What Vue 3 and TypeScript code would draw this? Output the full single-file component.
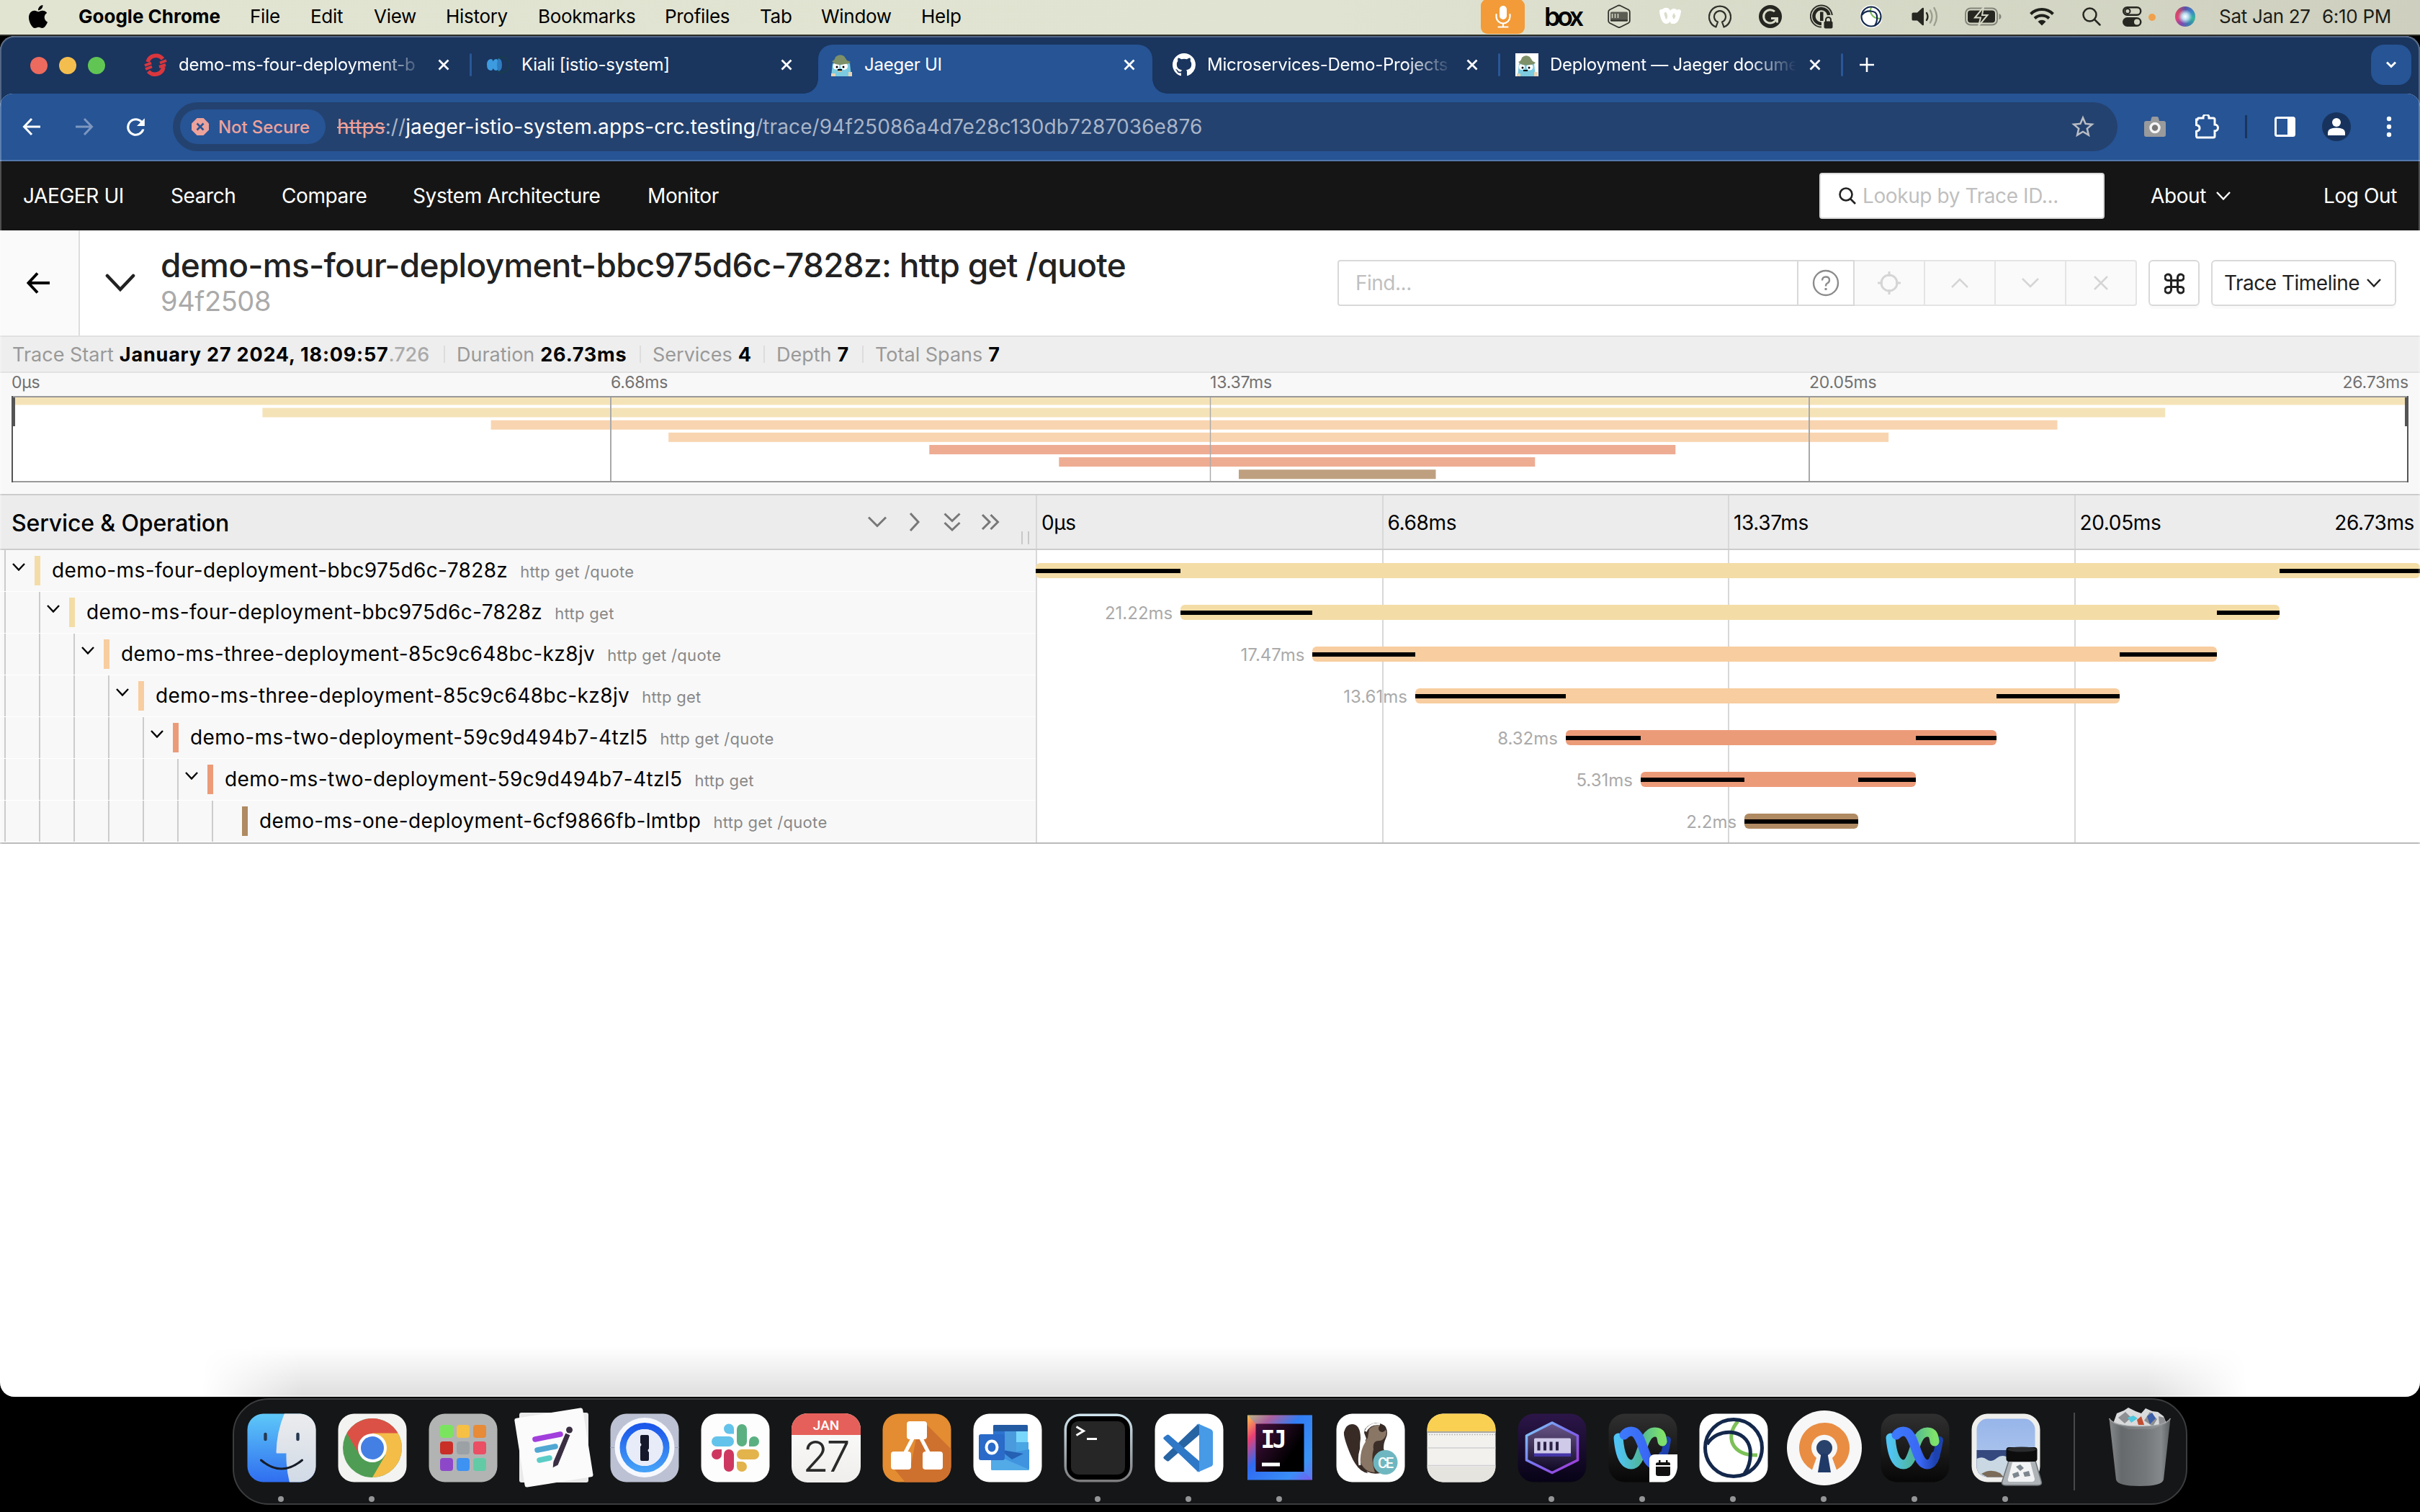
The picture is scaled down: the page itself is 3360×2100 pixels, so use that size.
<script setup lang="ts">
interface Span {
  service: string
  operation: string
  duration: string
  start: number
  end: number
  color: string
  mini: string
}

const spans: Span[] = [
  { service: 'demo-ms-four-deployment-bbc975d6c-7828z', operation: 'http get /quote', duration: '', start: 0, end: 1, color: '#f3dca6', mini: '#f5e3b8' },
  { service: 'demo-ms-four-deployment-bbc975d6c-7828z', operation: 'http get', duration: '21.22ms', start: 0.1047, end: 0.8985, color: '#f3dca6', mini: '#f5e3b8' },
  { service: 'demo-ms-three-deployment-85c9c648bc-kz8jv', operation: 'http get /quote', duration: '17.47ms', start: 0.2, end: 0.8535, color: '#f8cd9f', mini: '#f8d5b0' },
  { service: 'demo-ms-three-deployment-85c9c648bc-kz8jv', operation: 'http get', duration: '13.61ms', start: 0.2741, end: 0.7831, color: '#f8cd9f', mini: '#f8d5b0' },
  { service: 'demo-ms-two-deployment-59c9d494b7-4tzl5', operation: 'http get /quote', duration: '8.32ms', start: 0.3829, end: 0.6942, color: '#ec9b79', mini: '#eeac93' },
  { service: 'demo-ms-two-deployment-59c9d494b7-4tzl5', operation: 'http get', duration: '5.31ms', start: 0.437, end: 0.6356, color: '#ec9b79', mini: '#eeac93' },
  { service: 'demo-ms-one-deployment-6cf9866fb-lmtbp', operation: 'http get /quote', duration: '2.2ms', start: 0.512, end: 0.5942, color: '#af8a62', mini: '#bea080' },
]

const ticks = ['0µs', '6.68ms', '13.37ms', '20.05ms', '26.73ms']

const pct = (v: number) => `${(v * 100).toFixed(3)}%`

function criticalPath(i: number): [number, number][] {
  const span = spans[i]
  const child = spans[i + 1]
  if (!child) return [[span.start, span.end]]
  return [[span.start, child.start], [child.end, span.end]]
}
</script>

<template>
  <div class="desktop">
    <header class="menubar">
      <nav class="menus">
        <svg class="apple" viewBox="0 0 24 24"><path d="M12.152 6.896c-.948 0-2.415-1.078-3.96-1.04-2.04.027-3.91 1.183-4.961 3.014-2.117 3.675-.546 9.103 1.519 12.09 1.013 1.454 2.208 3.09 3.792 3.039 1.52-.065 2.09-.987 3.935-.987 1.831 0 2.35.987 3.96.948 1.637-.026 2.676-1.48 3.676-2.948 1.156-1.688 1.636-3.325 1.662-3.415-.039-.013-3.182-1.221-3.22-4.857-.026-3.04 2.48-4.494 2.597-4.559-1.429-2.09-3.623-2.324-4.39-2.376-2-.156-3.675 1.09-4.61 1.09zM15.53 3.83c.843-1.012 1.4-2.427 1.245-3.83-1.207.052-2.662.805-3.532 1.818-.78.896-1.454 2.338-1.273 3.714 1.338.104 2.715-.688 3.559-1.701" /></svg>
        <b>Google Chrome</b>
        <span>File</span>
        <span>Edit</span>
        <span>View</span>
        <span>History</span>
        <span>Bookmarks</span>
        <span>Profiles</span>
        <span>Tab</span>
        <span>Window</span>
        <span>Help</span>
      </nav>
      <div class="status">
        <span class="mic">
          <svg viewBox="0 0 24 40"><rect x="7" y="5" width="10" height="19" rx="5" fill="#fff" /><path d="M2.500 17v3a9.500 9.500 0 0 0 19 0v-3M12 30v4M5.500 34.500h13" fill="none" stroke="#fff" stroke-width="2.200" stroke-linecap="round" /></svg>
        </span>
        <span class="box">box</span>
        <svg width="32" height="34" viewBox="0 0 32 34"><path d="M14 2 3 7.500Q1.200 8.500 1.200 10.500v12.500q0 2 1.800 3L14 31.500q2 1 4 0L29 26q1.800-1 1.800-3V10.500q0-2-1.800-3L18 2q-2-1-4 0z" fill="none" stroke="#30312b" stroke-width="1.800" /><rect x="4" y="10.500" width="24" height="13" rx="1.500" fill="#5b5c52" /><path d="M4 21.500h24v1q0 1-1 1H5q-1 0-1-1z" fill="#30312b" /><path d="M6.500 13v6M10.500 13v6M14.500 13v6" stroke="#d9dbc9" stroke-width="1.500" /></svg>
        <svg width="32" height="26" viewBox="0 0 32 26" fill="none" stroke="#fff" stroke-width="6" stroke-linecap="round"><path d="M4 6q2 14 6.500 14C16 20 15 6 21 5q3 0 4 4" /><path d="M7 5q5-4 7.500 4T19 20c6 1 8-8 9-14" /></svg>
        <svg width="32" height="34" viewBox="0 0 32 34" fill="none" stroke="#30312b" stroke-width="2.200" stroke-linejoin="round"><path d="M10.500 31.500A15 15 0 1 1 21.500 31.500L19 24.500a8 8 0 1 0-6 0z" /></svg>
        <svg width="32" height="34" viewBox="0 0 32 34"><circle cx="16" cy="17" r="16" fill="#262721" /><path d="M22 10A9.200 9.200 0 1 0 24.500 20M17 19.500h8.500v6" fill="none" stroke="#d9dbc9" stroke-width="3" /></svg>
        <svg width="32" height="34" viewBox="0 0 32 34"><path d="M16 31.500A15 15 0 1 1 30.800 15" fill="none" stroke="#30312b" stroke-width="2" /><path d="M16 27A10.500 10.500 0 1 1 26.300 15" fill="none" stroke="#262721" stroke-width="4.500" /><rect x="14" y="10.500" width="4.500" height="12.500" fill="#262721" /><rect x="19.500" y="23.500" width="12" height="10" rx="2" fill="#262721" /><path d="M22 24v-2.500a3.500 3.500 0 0 1 7 0V24" fill="none" stroke="#262721" stroke-width="2" /></svg>
        <svg width="30" height="34" viewBox="0 0 30 34"><circle cx="15" cy="17" r="16" fill="#fff" /><path d="M16 3c-5 7 0 17 12 17" fill="none" stroke="#7cc05a" stroke-width="2" /><circle cx="15" cy="17" r="13.500" fill="none" stroke="#14284e" stroke-width="2.200" /><path d="M2 15C8 7 22 8 23 16q1 7-3 14" fill="none" stroke="#14284e" stroke-width="2.200" /></svg>
        <svg width="40" height="30" viewBox="0 0 40 30"><path d="M2.500 9.500H8L15 3q2-1 2 1v22q0 2-2 1l-7-6.500H2.500Q.5 20.500.5 19v-8q0-1.500 2-1.500z" fill="#262721" /><path d="M21 10q3 5 0 10" fill="none" stroke="#262721" stroke-width="2.400" stroke-linecap="round" /><path d="M26 6.500q5 8.500 0 17M31.500 3q7 12 0 24" fill="none" stroke="#9b9d8d" stroke-width="2.400" stroke-linecap="round" /></svg>
        <svg width="52" height="26" viewBox="0 0 52 26"><rect x="1" y="1.500" width="44" height="23" rx="7" fill="none" stroke="#83857a" stroke-width="2" /><path d="M47.500 9q3 1 3 4t-3 4z" fill="#83857a" /><rect x="4" y="4.500" width="38" height="17" rx="4" fill="#262721" /><path d="M26 0 14 14.500h8L19 26l12.500-15H24z" fill="#262721" stroke="#d6d8c6" stroke-width="2" /></svg>
        <svg width="36" height="26" viewBox="0 0 36 26" fill="none" stroke="#1f201b" stroke-width="4"><path d="M2.500 9.500a22 22 0 0 1 31 0M8 15.500a14.500 14.500 0 0 1 20 0" /><path d="M12.500 20a8 8 0 0 1 11 0L18 25.500z" fill="#1f201b" stroke="none" /></svg>
        <svg width="26" height="26" viewBox="0 0 26 26" fill="none" stroke="#262721" stroke-width="2.500" stroke-linecap="round"><circle cx="10.500" cy="10.500" r="9" /><path d="m17 17 7.500 7.500" /></svg>
        <svg width="27" height="28" viewBox="0 0 27 28"><rect x="1.200" y="1.200" width="24" height="10.500" rx="5.200" fill="none" stroke="#262721" stroke-width="2.400" /><circle cx="7" cy="6.400" r="3.500" fill="none" stroke="#262721" stroke-width="2" /><rect x="0" y="15" width="26.500" height="13" rx="6.500" fill="#262721" /><circle cx="20" cy="21.500" r="4" fill="#d3d5c4" /></svg>
        <i class="dot"></i>
        <i class="siri"></i>
        <span>Sat Jan 27</span>
        <span>6:10 PM</span>
      </div>
    </header>

    <main class="window">
      <div class="tabstrip">
        <div class="lights"><i class="red"></i><i class="amber"></i><i class="green"></i></div>

        <div class="tab divided">
          <svg class="fav" viewBox="0 0 32 32" fill="none"><path d="M5 12A12 12 0 0 1 26 8" stroke="#d9363e" stroke-width="5.500" /><path d="M27 19A12 12 0 0 1 6 25" stroke="#d9363e" stroke-width="5.500" /><path d="M22 13.500 31 10M21 19l9-3M1 17l9-3.500M2 22l9-3.500" stroke="#d9363e" stroke-width="4" /></svg>
          <span class="title fade">demo-ms-four-deployment-b</span>
          <svg class="close" viewBox="0 0 18 18"><path d="m2.500 2.500 13 13m0-13-13 13" /></svg>
        </div>
        <div class="tab">
          <svg class="fav" viewBox="0 0 32 32"><circle cx="21" cy="16" r="10.500" fill="none" stroke="#173e4d" stroke-width="2" /><path d="M6 8q-6 0-6 8t6 8q3 0 3-8T6 8zM13 8q-5 0-5 8t5 8q3 0 3-8t-3-8z" fill="#3d9be0" /><path d="M16 7q5 1 5 9t-5 9q-2-4-2-9t2-9z" fill="#2f7cc0" /></svg>
          <span class="title">Kiali [istio-system]</span>
          <svg class="close" viewBox="0 0 18 18"><path d="m2.500 2.500 13 13m0-13-13 13" /></svg>
        </div>
        <div class="tab active">
          <svg class="fav" viewBox="0 0 32 32"><path d="M4 14h24l2 18H2z" fill="#7ccbe0" /><path d="M2 28h6v4H2zM26 26h5v6h-5z" fill="#e8d3b3" /><circle cx="9" cy="18" r="4.500" fill="#fff" /><circle cx="20" cy="18" r="5" fill="#fff" /><circle cx="10" cy="19" r="1.500" /><circle cx="19" cy="19" r="1.500" /><path d="M12 23h5v3h-5z" fill="#d9b58a" /><path d="M11 22h6v2h-6z" /><path d="M3 11q4-1 5-6 6-5 12-1l4 6 5 2q-2 3-8 3Q8 18 3 11z" fill="#7d9068" /></svg>
          <span class="title">Jaeger UI</span>
          <svg class="close" viewBox="0 0 18 18"><path d="m2.500 2.500 13 13m0-13-13 13" /></svg>
        </div>
        <div class="tab divided">
          <svg class="fav" viewBox="0 0 16 16"><path fill="#fff" d="M8 0C3.580 0 0 3.580 0 8c0 3.540 2.290 6.530 5.470 7.590.4.070.55-.17.55-.38 0-.19-.01-.82-.01-1.490-2.010.37-2.530-.49-2.690-.94-.09-.23-.48-.94-.82-1.130-.28-.15-.68-.52-.01-.53.63-.01 1.080.58 1.230.82.72 1.210 1.870.87 2.330.66.070-.52.28-.87.51-1.070-1.780-.2-3.640-.89-3.640-3.950 0-.87.31-1.590.82-2.150-.08-.2-.36-1.020.08-2.120 0 0 .67-.21 2.200.82.64-.18 1.320-.27 2-.27s1.360.09 2 .27c1.530-1.040 2.200-.82 2.200-.82.44 1.100.16 1.920.08 2.120.51.56.82 1.270.82 2.150 0 3.070-1.870 3.750-3.650 3.950.29.25.54.73.54 1.480 0 1.070-.01 1.930-.01 2.200 0 .21.15.46.55.38A8.010 8.010 0 0 0 16 8c0-4.420-3.580-8-8-8z" /></svg>
          <span class="title fade">Microservices-Demo-Projects</span>
          <svg class="close" viewBox="0 0 18 18"><path d="m2.500 2.500 13 13m0-13-13 13" /></svg>
        </div>
        <div class="tab divided">
          <svg class="fav" viewBox="0 0 32 32"><path d="M0 0h32v32H0z" fill="#fff" /><path d="M5 14h21l2 18H3z" fill="#7ccbe0" /><path d="M2 28h5v4H2zM26 26h5v6h-5z" fill="#e8d3b3" /><circle cx="9" cy="19" r="4" fill="#fff" /><circle cx="20" cy="19" r="4.500" fill="#fff" /><circle cx="10" cy="20" r="1.500" /><circle cx="19" cy="20" r="1.500" /><path d="M11 23h6v2h-6z" /><path d="M4 12q4-1 5-6 5-5 11-1l4 6 4 2q-2 3-8 3Q9 18 4 12z" fill="#7d9068" /></svg>
          <span class="title fade">Deployment — Jaeger docume</span>
          <svg class="close" viewBox="0 0 18 18"><path d="m2.500 2.500 13 13m0-13-13 13" /></svg>
        </div>
        <svg class="plus" viewBox="0 0 20 20"><path d="M10 0v20M0 10h20" stroke="#fff" stroke-width="2.600" /></svg>
        <span class="tabsearch"><svg width="16" height="12" viewBox="0 0 16 12"><path d="m2 2.500 6 6 6-6" fill="none" stroke="#fff" stroke-width="3" /></svg></span>
      </div>

      <div class="toolbar">
        <svg width="28" height="28" viewBox="0 0 28 28" fill="none" stroke="#fff" stroke-width="3"><path d="M26 14H4M14 3 3.500 14 14 25" /></svg>
        <svg width="28" height="28" viewBox="0 0 28 28" fill="none" stroke="#7d97c0" stroke-width="3"><path d="M2 14h22M14 3l10.500 11L14 25" /></svg>
        <svg class="reload" viewBox="0 0 24 24"><path fill="#fff" d="M17.650 6.350A7.958 7.958 0 0 0 12 4a8 8 0 1 0 7.730 10h-2.080A6 6 0 1 1 12 6c1.660 0 3.140.69 4.220 1.780L13 11h7V4l-2.350 2.350z" /></svg>
        <div class="omnibox">
          <span class="chip">
            <svg width="24" height="24" viewBox="0 0 24 24"><path d="M7.500 0h9L24 7.500v9L16.500 24h-9L0 16.500v-9z" fill="#eda29b" /><path d="m7.500 7.500 9 9m0-9-9 9" stroke="#265495" stroke-width="2.600" /></svg>
            <span>Not Secure</span>
          </span>
          <span class="url"><s>https</s><i>://</i><b>jaeger-istio-system.apps-crc.testing</b><i>/trace/94f25086a4d7e28c130db7287036e876</i></span>
          <svg class="star" viewBox="0 0 24 24"><path fill="#b9bdc4" d="M22 9.240l-7.190-.62L12 2 9.190 8.630 2 9.240l5.460 4.730L5.820 21 12 17.270 18.180 21l-1.630-7.030L22 9.240zM12 15.400l-3.760 2.270 1-4.280-3.320-2.880 4.380-.38L12 6.100l1.710 4.040 4.380.38-3.320 2.880 1 4.280L12 15.400z" /></svg>
        </div>
        <svg width="30" height="28" viewBox="0 0 30 28"><path d="M3 6h6l1-4q.4-2 2-2h6q1.600 0 2 2l1 4h6q3 0 3 3v16q0 3-3 3H3q-3 0-3-3V9q0-3 3-3z" fill="#999a9c" /><circle cx="15" cy="15.500" r="6" fill="#777" stroke="#f4f4f4" stroke-width="3.500" /></svg>
        <svg width="36" height="34" viewBox="0 0 36 34"><path d="M4 7q0-2 2-2h6V4a4 4 0 0 1 8 0v1h6q2 0 2 2v7a4.500 4.500 0 0 1 0 9v7q0 2-2 2H4q-1.500 0-1.500-2v-6.500q4.500-1 4.500-4.500t-4.500-4.500V7z" fill="none" stroke="#fff" stroke-width="3" /></svg>
        <i class="bar"></i>
        <svg width="30" height="28" viewBox="0 0 30 28"><rect x="1.500" y="1.500" width="26" height="25" rx="2" fill="none" stroke="#fff" stroke-width="3" /><path d="M18 1h9v26h-9z" fill="#fff" /></svg>
        <svg width="40" height="40" viewBox="0 0 40 40"><circle cx="20" cy="20" r="20" fill="#17335d" /><circle cx="20" cy="14" r="6" fill="#fff" /><path d="M8 32v-4q0-6.500 12-6.500T32 28v4z" fill="#fff" /></svg>
        <svg width="8" height="30" viewBox="0 0 8 30" fill="#fff"><circle cx="4" cy="4" r="3.200" /><circle cx="4" cy="15" r="3.200" /><circle cx="4" cy="26" r="3.200" /></svg>
      </div>

      <nav class="appnav">
        <b>JAEGER UI</b>
        <span>Search</span>
        <span>Compare</span>
        <span>System Architecture</span>
        <span>Monitor</span>
        <div class="lookup">
          <svg width="24" height="24" viewBox="0 0 24 24" fill="none" stroke="#222" stroke-width="2.600"><circle cx="10" cy="10" r="8.500" /><path d="m16 16 7 7" /></svg>
          <span>Lookup by Trace ID...</span>
        </div>
        <span>About</span>
        <svg width="20" height="12" viewBox="0 0 20 12" fill="none" stroke="#fff" stroke-width="2.400"><path d="m1 1 9 9.500L19 1" /></svg>
        <span class="logout">Log Out</span>
      </nav>

      <section class="tracehead">
        <span class="back"><svg width="34" height="30" viewBox="0 0 34 30" fill="none" stroke="#000" stroke-width="4"><path d="M33 15H4M16 1.500 3.500 15 16 28.500" /></svg></span>
        <svg class="collapse" viewBox="0 0 42 26" fill="none" stroke="#222" stroke-width="4.600" stroke-linecap="round"><path d="m3 3 18 19L39 3" /></svg>
        <div class="names">
          <h1>demo-ms-four-deployment-bbc975d6c-7828z: http get /quote</h1>
          <small>94f2508</small>
        </div>
        <div class="find">
          <span class="input">Find...</span>
          <span class="help"><svg width="38" height="38" viewBox="0 0 38 38" fill="none" stroke="#8c8c8c" stroke-width="2.400"><circle cx="19" cy="19" r="17" /><path d="M14 15.500q0-5 5-5t5 4.500q0 3-3 4.500-2 1-2 4" /><path d="M19 26v3" stroke-width="3" /></svg></span>
          <span class="btn"><svg width="34" height="34" viewBox="0 0 34 34" fill="none" stroke="#d5d5d5" stroke-width="3"><circle cx="17" cy="17" r="11" /><path d="M17 1v7M17 26v7M1 17h7M26 17h7" /></svg></span>
          <span class="btn"><svg width="24" height="14" viewBox="0 0 24 14" fill="none" stroke="#d5d5d5" stroke-width="2.600"><path d="M1 13 12 2l11 11" /></svg></span>
          <span class="btn"><svg width="24" height="14" viewBox="0 0 24 14" fill="none" stroke="#d5d5d5" stroke-width="2.600"><path d="m1 1 11 11L23 1" /></svg></span>
          <span class="btn"><svg width="20" height="20" viewBox="0 0 20 20" fill="none" stroke="#d5d5d5" stroke-width="2.600"><path d="m1 1 18 18M19 1 1 19" /></svg></span>
        </div>
        <span class="cmd"><svg width="28" height="30" viewBox="0 0 28 30" fill="none" stroke="#222" stroke-width="3"><path d="M9.500 10.500h9v9h-9zM9.500 10.500H6A4.300 4.300 0 1 1 9.500 6zM18.500 10.500V6a4.300 4.300 0 1 1 3.500 4.500zM18.500 19.500H22a4.300 4.300 0 1 1-3.500 4.500zM9.500 19.500V24A4.300 4.300 0 1 1 6 19.500z" /></svg></span>
        <span class="viewsel"><em>Trace Timeline</em><svg width="20" height="12" viewBox="0 0 20 12" fill="none" stroke="#222" stroke-width="2.400"><path d="m1 1 9 9.500L19 1" /></svg></span>
      </section>

      <section class="overview">
        <span class="c1"><i>Trace Start</i> <b>January 27 2024, 18:09:57</b><b class="ms">.726</b></span>
        <span class="c2"><i>Duration</i> <b>26.73ms</b></span>
        <span class="c3"><i>Services</i> <b>4</b></span>
        <span class="c4"><i>Depth</i> <b>7</b></span>
        <span class="c5"><i>Total Spans</i> <b>7</b></span>
      </section>

      <section class="minimap">
        <div class="miniticks"><span v-for="t in ticks" :key="t">{{ t }}</span></div>
        <svg class="canvas" viewBox="0 0 3328 120" preserveAspectRatio="none">
          <rect width="3328" height="120" fill="#fff" />
          <rect v-for="(s, i) in spans" :key="i" :x="s.start * 3328" :y="i * 17.14 - 0.6" :width="(s.end - s.start) * 3328" height="13" :fill="s.mini" />
          <path d="M832 0v120M2496 0v120" stroke="#a9a9a9" stroke-width="2" /><path d="M1664.500 0v120" stroke="#a9a9a9" stroke-width="1.400" />
          <path d="M0 1h3328M0 119h3328" stroke="#999" stroke-width="2" />
          <path d="M1 0v120M3327 0v120" stroke="#555" stroke-width="2" />
          <path d="M2.500 2v40M3325.500 2v40" stroke="#555" stroke-width="5" />
        </svg>
      </section>

      <section class="timeline">
        <div class="thead">
          <div class="namecol">
            <h2>Service &amp; Operation</h2>
            <svg width="28" height="28" viewBox="0 0 28 28"><path d="m2 7.500 12 12 12-12" /></svg>
            <svg width="28" height="28" viewBox="0 0 28 28"><path d="m8 2 11 12L8 26" /></svg>
            <svg width="28" height="28" viewBox="0 0 28 28"><path d="m3.500 2.500 10.500 10 10.500-10M3.500 15 14 25l10.500-10" /></svg>
            <svg width="28" height="28" viewBox="0 0 28 28"><path d="m4 4 10 10L4 24M15.500 4l10 10-10 10" /></svg>
            <i class="grip"></i>
          </div>
          <div class="scale"><span v-for="t in ticks" :key="t">{{ t }}</span></div>
        </div>

        <div v-for="(s, i) in spans" :key="i" class="row">
          <div class="namecol">
            <i v-for="g in i + 1" :key="g" class="guide"></i>
            <span class="caret"><svg v-if="i < spans.length - 1" width="18" height="11" viewBox="0 0 18 11"><path d="m1 1 8 8.500L17 1" fill="none" stroke="#000" stroke-width="2.400" /></svg></span>
            <i class="swatch" :style="{ background: s.color }"></i>
            <span class="svc">{{ s.service }}</span>
            <span class="op">{{ s.operation }}</span>
          </div>
          <div class="track">
            <span v-if="s.duration" class="dur" :style="{ right: pct(1 - s.start) }">{{ s.duration }}</span>
            <i class="spanbar" :style="{ left: pct(s.start), width: pct(s.end - s.start), background: s.color }"></i>
            <i v-for="(c, k) in criticalPath(i)" :key="k" class="crit" :style="{ left: pct(c[0]), width: pct(c[1] - c[0]) }"></i>
          </div>
        </div>
      </section>
      <i class="glow"></i>
    </main>

    <footer class="dock">
      <div class="app run">
        <svg viewBox="0 0 96 96">
          <defs><linearGradient id="fb" x2="0" y2="1"><stop stop-color="#5ec9f8" /><stop offset="1" stop-color="#2f6df0" /></linearGradient><linearGradient id="fw" x2="0" y2="1"><stop stop-color="#ececee" /><stop offset="1" stop-color="#d0dae6" /></linearGradient><clipPath id="sq"><rect x=".5" y=".5" width="95" height="95" rx="22" /></clipPath></defs>
          <g clip-path="url(#sq)"><path d="M0 0h96v96H0z" fill="url(#fb)" /><path d="M52 0q-11 26-11.500 54 0 1.500 1.500 1.500h12.500Q54 76 59 96h37V0z" fill="url(#fw)" /><path d="M25.500 29v7M70.500 29v7" stroke="#26384f" stroke-width="4.400" stroke-linecap="round" /><path d="M19.500 65q28 24 57 0" fill="none" stroke="#151c28" stroke-width="3" stroke-linecap="round" /></g>
        </svg>
      </div>
      <div class="app run">
        <svg viewBox="0 0 96 96"><rect x=".5" y=".5" width="95" height="95" rx="22" fill="#f3f3f2" /><circle cx="48" cy="48" r="41" fill="#4f9d54" /><path d="M48 48 12.500 27.500A41 41 0 0 1 83.500 27.500z" fill="#dc5146" /><path d="M48 27.500h35.500A41 41 0 0 1 48 89L66 58z" fill="#f3bd48" /><path d="M12.500 27.500 30.500 58 48 27.500z" fill="#dc5146" /><circle cx="48" cy="48" r="20" fill="#fff" /><circle cx="48" cy="48" r="16" fill="#447fe4" /></svg>
      </div>
      <div class="app">
        <svg viewBox="0 0 96 96"><rect x=".5" y=".5" width="95" height="95" rx="22" fill="#b2b4b4" /><g><rect x="16" y="16" width="18" height="18" rx="4" fill="#7be45f" /><rect x="39" y="16" width="18" height="18" rx="4" fill="#f5c044" /><rect x="62" y="16" width="18" height="18" rx="4" fill="#e78b37" /><rect x="16" y="39" width="18" height="18" rx="4" fill="#c92f26" /><rect x="39" y="39" width="18" height="18" rx="4" fill="#9ba1a5" /><rect x="62" y="39" width="18" height="18" rx="4" fill="#ea4f64" /><rect x="16" y="62" width="18" height="18" rx="4" fill="#8d48c9" /><rect x="39" y="62" width="18" height="18" rx="4" fill="#3d92f2" /><rect x="62" y="62" width="18" height="18" rx="4" fill="#62cba6" /></g></svg>
      </div>
      <div class="app">
        <svg class="wide" viewBox="-8 -8 112 112"><rect x="0" y="-1" width="96" height="97" rx="3" fill="#e9e9ea" /><g transform="rotate(-9 48 48)"><rect x="0" y="-1" width="96" height="97" rx="3" fill="#fbfbfc" /></g><path d="m22 36 35-7" stroke="#a23fdc" stroke-width="7.500" stroke-linecap="round" /><path d="m25 51 25-5" stroke="#50a7d2" stroke-width="7.500" stroke-linecap="round" /><path d="m28 65 14-3" stroke="#5accc6" stroke-width="7.500" stroke-linecap="round" /><path d="m64 27 7 3-17 42-8 4 1-9z" fill="#3a2f42" stroke="#fbfbfc" stroke-width="1" /><circle cx="69.500" cy="23" r="4.500" fill="#3a2f42" /></svg>
      </div>
      <div class="app">
        <svg viewBox="0 0 96 96"><defs><linearGradient id="op" x2="0" y2="1"><stop stop-color="#1b57ea" /><stop offset="1" stop-color="#45a0f8" /></linearGradient></defs><rect x=".5" y=".5" width="95" height="95" rx="22" fill="#bcc2d3" /><path d="M0 47.500h96" stroke="#9da5bb" /><circle cx="48" cy="47.500" r="41.500" fill="#f6f8fe" /><circle cx="48" cy="47.500" r="30" fill="#fff" stroke="url(#op)" stroke-width="9" /><circle cx="48" cy="47.500" r="25.500" fill="#e8ecf8" /><path d="M44 30h8q2 0 2 2v17q-3 2.500 0 5v10q0 2-2 2h-8q-2 0-2-2V46q3-2.500 0-5v-9q0-2 2-2z" fill="#15182a" /></svg>
      </div>
      <div class="app">
        <svg viewBox="0 0 96 96"><rect x=".5" y=".5" width="95" height="95" rx="22" fill="#fdfdfd" /><g fill="#63c3ea"><path d="M46 28.500V21.500a7 7 0 1 0-7 7z" /><rect x="15" y="32" width="31" height="14" rx="7" /></g><g fill="#5ab081"><rect x="50" y="15" width="14" height="31" rx="7" /><path d="M67 46V39a7 7 0 1 1 7 7z" /></g><g fill="#ce3860"><rect x="32" y="50" width="14" height="31" rx="7" /><path d="M29 50v7a7 7 0 1 1-7-7z" /></g><g fill="#e3b34c"><rect x="50" y="50" width="31" height="14" rx="7" /><path d="M50 67h7a7 7 0 1 1-7 7z" /></g></svg>
      </div>
      <div class="app calendar"><span class="mon">JAN</span><span class="day">27</span></div>
      <div class="app">
        <svg viewBox="0 0 96 96"><g clip-path="url(#sq)"><path d="M0 0h96v96H0z" fill="#e38c31" /><path d="M60 14 96 50v46H32L14 74l26-4 8-40z" fill="#cf712e" /></g><path d="M43 33 29 60M53 33l14 27" stroke="#fff" stroke-width="5" /><rect x="34" y="11" width="28" height="25" rx="4" fill="#fff" /><rect x="12" y="53" width="28" height="25" rx="4" fill="#fff" /><rect x="56" y="53" width="28" height="25" rx="4" fill="#fff" /></svg>
      </div>
      <div class="app outlook">
        <svg viewBox="0 0 96 96"><rect x=".5" y=".5" width="95" height="95" rx="22" fill="#fff" /><path d="M28 18q0-2 2-2h44q2 0 2 2v38H28z" fill="#2e74cf" /><path d="M28 18q0-2 2-2h44q2 0 2 2v7H28z" fill="#235ba2" /><path d="M44 25h16v15H44zM44 40h16v15H44z" fill="#4a9ade" /><path d="M60 25h16v15H60z" fill="#78d7fb" /><path d="M60 40h17v15H60z" fill="#4ba6e4" /><path d="M25 60 78 50v27q0 2-2 2H27q-2 0-2-2z" fill="#3f93df" /><path d="m25 55 53 23q-1 1-2 1H27q-2 0-2-2z" fill="#52aae7" /><path d="M36 50 70 56 54 64z" fill="#2460b4" /><rect x="8" y="29" width="36" height="36" rx="3" fill="#2a6ac8" /><ellipse cx="26" cy="47" rx="7.500" ry="8.500" fill="none" stroke="#fff" stroke-width="4" /></svg>
      </div>
      <div class="app run terminal">
        <svg viewBox="0 0 96 96"><defs><linearGradient id="tm" x2="0" y2="1"><stop stop-color="#cfe5ef" /><stop offset="1" stop-color="#7b7a7c" /></linearGradient></defs><rect x=".5" y=".5" width="95" height="95" rx="22" fill="url(#tm)" /><rect x="4" y="4" width="88" height="88" rx="18" fill="#000" /><rect x="10" y="11" width="75" height="74" rx="10" fill="#262627" /><path d="m17.500 18.500 10 6-10 6M32 35.500h14" fill="none" stroke="#fff" stroke-width="3" /></svg>
      </div>
      <div class="app run">
        <svg viewBox="0 0 96 96"><rect x=".5" y=".5" width="95" height="95" rx="22" fill="#fff" /><path d="M13 60q-1.500 1.500 0 3l4 3q1.500 1 3 0L63 29V15q-2-1-4 1z" fill="#2664a4" /><path d="M13 36q-1.500-1.500 0-3l4-3q1.500-1 3 0L63 67v14q-2 1-4-1z" fill="#2e78c7" /><path d="m62 15 16 7q3 1.500 3 4v44q0 3-3 4l-16 7q-3 1-4-1 4 2 4-3V19q0-4-4-3 2-2 4-1z" fill="#479ae6" /></svg>
      </div>
      <div class="app run">
        <svg viewBox="0 0 96 96"><defs><linearGradient id="ij1" x2="1" y2="1"><stop stop-color="#ffc34a" /><stop offset=".2" stop-color="#e83f73" /><stop offset=".42" stop-color="#2f6bf2" /><stop offset=".8" stop-color="#3a8ef6" /><stop offset="1" stop-color="#7a5af0" /></linearGradient><linearGradient id="ij2" x2="1" y2=".7"><stop stop-color="#471041" /><stop offset=".8" stop-color="#000" /></linearGradient></defs><path d="M3 2.500h90v90H3z" fill="url(#ij1)" /><path d="M3 2.500 14.500 14.500h67L93 2.500zM81.500 14.500 93 2.500v90L81.500 81z" fill="#39a0f5" opacity=".35" /><path d="M14.500 14.500h67v66.500h-67z" fill="url(#ij2)" /><text x="21.500" y="47.500" font-family="DejaVu Sans Mono, monospace" font-size="33" font-weight="700" fill="#fff" textLength="36">IJ</text><path d="M23 68.500h25v5H23z" fill="#fff" /></svg>
      </div>
      <div class="app">
        <svg viewBox="0 0 96 96"><rect x=".5" y=".5" width="95" height="95" rx="22" fill="#fff" /><path d="M22 15q12 0 12 20-4 25 10 48-14-2-24-26T11 26q3-11 11-11z" fill="#382b26" /><path d="M40 22q6-8 16-9 9 1 13 6 4 8 0 16-3 6-3 14l8 20-12 14q-18 3-26-8-5-20 6-40l-3-8z" fill="#3b2e29" /><path d="M46 22q6-6 14-5 8 2 10 9-1 10-9 12-11-1-9 12-4 14 2 32-14 0-20-14-2-20 10-34z" fill="#8a7665" /><path d="M41 25q6-12 20-10" fill="none" stroke="#fff" stroke-width="3" /><path d="M33 72q-3-18 7-34" fill="none" stroke="#fff" stroke-width="3" /><circle cx="64" cy="21" r="5" fill="#382b26" /><circle cx="68.500" cy="68" r="17" fill="#6fb7c0" /><text x="58" y="75.500" font-size="20" font-family="Roboto" font-weight="500" fill="#fff" textLength="22">CE</text></svg>
      </div>
      <div class="app">
        <svg viewBox="0 0 96 96"><g clip-path="url(#sq)"><path d="M0 0h96v96H0z" fill="#f2f1ee" /><path d="M0 0h96v25H0z" fill="#fad052" /><path d="M0 25h96v2H0z" fill="#a8a7a4" /><path d="M3 29.500h92" stroke="#b4b3b0" stroke-width="1.500" stroke-dasharray="1.500 2" /><path d="M0 48h96M0 72.500h96" stroke="#cfced1" stroke-width="1.500" /><path d="M0 74h96v22H0z" fill="#e6e4df" /></g></svg>
      </div>
      <div class="app run">
        <svg viewBox="0 0 96 96"><defs><linearGradient id="hb" x2="0" y2="1"><stop stop-color="#2c1649" /><stop offset="1" stop-color="#070316" /></linearGradient><linearGradient id="hs" x2="1" y2="1"><stop offset=".1" stop-color="#7dc0f5" /><stop offset=".5" stop-color="#7a6cf0" /><stop offset="1" stop-color="#a535d2" /></linearGradient><linearGradient id="hi" x2="0" y2="1"><stop stop-color="#6b578a" /><stop offset="1" stop-color="#0c0620" /></linearGradient></defs><rect x=".5" y=".5" width="95" height="95" rx="22" fill="url(#hb)" /><path d="M48 13 83.500 31v34L48 82.500 12.500 65V31z" fill="url(#hi)" stroke="url(#hs)" stroke-width="3.600" stroke-linejoin="round" /><path d="M23 36q0-1.500 1.500-1.500h48q1.500 0 1.500 1.500v20H23z" fill="#cfcae8" /><path d="M23 55.500h51V60H23z" fill="#4536a8" /><path d="M29.500 39.500v12M38 39.500v12M46.500 39.500v12M55 39.500v12" stroke="#2d2147" stroke-width="4" /></svg>
      </div>
      <div class="app run">
        <svg viewBox="0 0 96 96"><defs><linearGradient id="wb" x2="0" y2="1"><stop stop-color="#303031" /><stop offset="1" stop-color="#070707" /></linearGradient><linearGradient id="wc" x1="0" x2="1"><stop stop-color="#50c4f5" /><stop offset=".5" stop-color="#4fb59a" /><stop offset="1" stop-color="#7ee26a" /></linearGradient><linearGradient id="wd" x1="0" x2="1"><stop stop-color="#3d78fa" /><stop offset=".6" stop-color="#3a68f5" /><stop offset="1" stop-color="#1d41ae" /></linearGradient></defs><rect x=".5" y=".5" width="95" height="95" rx="22" fill="url(#wb)" /><path d="M65 71c10 0 14-15 17-34" fill="none" stroke="#1d41ae" stroke-width="10" stroke-linecap="round" /><path d="M14 34c2 25 8 37 18 37 16 0 13-45 33-45 8 0 9 6 10 13" fill="none" stroke="url(#wc)" stroke-width="13" stroke-linecap="round" /><path d="M22 30q4-5 10-5c17 0 16 46 33 46 6 0 9-6 11-12" fill="none" stroke="url(#wd)" stroke-width="13" stroke-linecap="round" /><path d="M57 65q0-8 8-8h31v18q-2 18-18 20.500H57z" fill="#fff" /><path d="M70 68h14q2 0 2 2v2H66v-2q0-2 4-2zM66 74h20v10q0 3-3 3H69q-3 0-3-3zM70 65h2.500v4H70zM80 65h2.500v4H80z" fill="#111" /></svg>
      </div>
      <div class="app run">
        <svg viewBox="0 0 96 96"><rect x=".5" y=".5" width="95" height="95" rx="22" fill="#fff" /><path d="M54 11C36 31 44 59 81 58" fill="none" stroke="#7cc057" stroke-width="5" /><circle cx="48" cy="48" r="39.500" fill="none" stroke="#14284c" stroke-width="5" /><path d="M11 43C25 19 66 20 71 50q2 20-8 34" fill="none" stroke="#14284c" stroke-width="5" /></svg>
      </div>
      <div class="app run">
        <svg class="disc" viewBox="-4 -4 104 104"><circle cx="48" cy="48" r="52" fill="#f7f7f7" /><path d="M31 78.500a35 35 0 1 1 34 0L59 62a18 18 0 1 0-22 0z" fill="#e98d43" /><circle cx="48" cy="48" r="11" fill="#29426b" /><path d="M43.500 56h9L57 82H39z" fill="#203a68" /></svg>
      </div>
      <div class="app run">
        <svg viewBox="0 0 96 96"><rect x=".5" y=".5" width="95" height="95" rx="22" fill="url(#wb)" /><path d="M65 71c10 0 14-15 17-34" fill="none" stroke="#1d41ae" stroke-width="10" stroke-linecap="round" /><path d="M14 34c2 25 8 37 18 37 16 0 13-45 33-45 8 0 9 6 10 13" fill="none" stroke="url(#wc)" stroke-width="13" stroke-linecap="round" /><path d="M22 30q4-5 10-5c17 0 16 46 33 46 6 0 9-6 11-12" fill="none" stroke="url(#wd)" stroke-width="13" stroke-linecap="round" /></svg>
      </div>
      <div class="app run">
        <svg class="over" viewBox="0 0 104 104"><defs><linearGradient id="ps" x2="0" y2="1"><stop stop-color="#97b5ea" /><stop offset="1" stop-color="#b5cbee" /></linearGradient></defs><rect x=".5" y=".5" width="95" height="95" rx="22" fill="#eeeeec" /><rect x="7.500" y="7.500" width="81" height="81" rx="15" fill="url(#ps)" /><path d="M7.500 51h81v22q0 15.500-15 15.500h-51q-15-2-15-15z" fill="#35497f" /><path d="M7.500 63q8-4 14 1t14-2 20 2l33-4v13q0 15.500-15 15.500h-51q-15-2-15-15z" fill="#c9d8e2" /><path d="M14 84q12-8 26-1l5 5.500H22z" fill="#7a6a58" /><path d="M52 66h37l8 28q2 6-5 6H48q-7 0-5-6z" fill="#aeb3b7" stroke="#6d7276" stroke-width="1.500" /><path d="M57 68h25l6 23q0 4-4 4H54q-4 0-3-4z" fill="#f2f3f4" /><path d="m62 74 6-3 5 5-5 4zM57 84l8-3 2 6-8 3zM72 82l8-2 2 7-8 1z" fill="#7c868e" /><rect x="48.500" y="47" width="43" height="20" rx="4" fill="#0d0d0e" /><ellipse cx="70" cy="50" rx="20" ry="3.500" fill="#2a2b2d" /></svg>
      </div>
      <i class="sep"></i>
      <div class="app trash">
        <svg viewBox="0 0 88 110"><defs><linearGradient id="tr" x1="0" x2="1"><stop stop-color="#8e9294" /><stop offset=".2" stop-color="#6c7073" /><stop offset=".6" stop-color="#7b7f81" /><stop offset=".85" stop-color="#8e9294" /><stop offset="1" stop-color="#5f6365" /></linearGradient></defs><path d="M7 22 12 8l10-4 6-4 10 5 8 3 6-7 9 4 8 1 8 6 4 10-20 8H28z" fill="#d9dadb" /><path d="m14 14 10-8 8 8-9 8zM50 18l8-12 10 10-6 10zM70 12l8 2 2 9-9 2z" fill="#8d8f92" /><path d="m27 14 8-3 6 4-9 6z" fill="#4fc8df" /><path d="m54 12 7-5 5 8-8 8z" fill="#3c5fa8" /><path d="m40 17 6-5 4 12h-8z" fill="#c04e31" /><path d="M1.500 15q6 11 42.500 11t42.500-11L77 100q-2 9-33 9t-33-9z" fill="url(#tr)" opacity=".93" /><path d="M1.500 15q6 11 42.500 11t42.500-11" fill="none" stroke="#a5a8aa" stroke-width="1.500" /></svg>
      </div>
    </footer>
  </div>
</template>

<style>
html, body { margin: 0; background: #000; }
</style>

<style scoped>
* { box-sizing: border-box; }
.desktop { width: 3360px; height: 2100px; overflow: hidden; display: flex; flex-direction: column; background: #000; font-family: Inter, "Noto Sans", sans-serif; font-size: 28px; color: #000; white-space: nowrap; }
svg { display: block; flex: none; }
i, em { font-style: normal; }
h1, h2 { margin: 0; font-weight: 500; }

.menubar { flex: none; height: 50px; padding-bottom: 3px; display: flex; align-items: center; background: linear-gradient(90deg, #e2e4d2 0%, #e0e3d1 55%, #cecfbe 100%); font-size: 26px; letter-spacing: -.3px; color: #000; border-bottom: 2px solid #2c2d27; }
.menus { width: 2056px; padding-left: 37px; display: grid; grid-template-columns: 72px 238px 84px 88px 100px 128px 176px 132px 85px 139px auto; align-items: center; }
.menus b { font-weight: 700; letter-spacing: 0; }
.apple { width: 32px; height: 32px; }
.status { flex: 1; display: grid; grid-template-columns: 90px 86px 71px 69px 70px 71px 70px 71px 74px 89px 74px 56px 35px 38px 61px 143px auto; align-items: center; color: #1c1d18; }
.status > svg { position: relative; top: .5px; }
.mic { width: 61px; height: 48px; margin: -2px 0 -3px; border-radius: 9px; background: #f29b38; display: flex; justify-content: center; align-items: center; }
.mic svg { width: 24px; height: 40px; }
.box { font-size: 36px; font-weight: 600; letter-spacing: -4.500px; color: #000; line-height: 45px; margin-top: 2px; margin-left: -2px; }
.dot { width: 10px; height: 10px; border-radius: 5px; background: #f0a04b; margin-left: 1px; margin-top: 2px; }
.siri { width: 28px; height: 28px; border-radius: 14px; margin-top: 1px; background: radial-gradient(circle at 50% 50%, #fff 0, #b9dcf0 22%, transparent 50%), conic-gradient(#5a4fa8, #3a86c8, #35b59c, #3a7fb0, #7c4bb0, #e0457a, #c94a6a, #5a4fa8); }

.window { position: relative; flex: none; height: 1890px; background: #fff; border-radius: 20px; overflow: hidden; display: flex; flex-direction: column; }
.window::after { content: ""; position: absolute; inset: 0; border: 2px solid rgba(255, 255, 255, .25); border-radius: 20px; }
.tabstrip { flex: none; height: 80px; background: #1a355e; display: flex; align-items: center; }
.lights { width: 184px; padding-left: 42px; display: flex; gap: 16px; padding-top: 2px; }
.lights i { width: 24px; height: 24px; border-radius: 12px; }
.red { background: #ed6a5e; }
.amber { background: #f4be4f; }
.green { background: #61c554; }
.tab { width: 476px; height: 68px; margin-top: 12px; padding: 0 0 12px 16px; display: flex; align-items: center; color: #fff; font-size: 24px; position: relative; }
.fav { width: 32px; height: 32px; }
.title { width: 346px; flex: none; margin-left: 16px; margin-right: 13px; line-height: 32px; letter-spacing: -.25px; }
.fade { -webkit-mask-image: linear-gradient(90deg, #000 275px, transparent 342px); mask-image: linear-gradient(90deg, #000 275px, transparent 342px); }
.close { width: 18px; height: 18px; fill: none; stroke: #fff; stroke-width: 2.800px; }
.divided::after { content: ""; width: 3px; height: 32px; border-radius: 2px; background: #2a5797; margin-left: 27px; }
.active { width: 464px; margin-right: 12px; background: #265495; border-radius: 20px 20px 0 0; }
.active::before, .active::after { content: ""; position: absolute; bottom: 0; width: 20px; height: 20px; }
.active::before { left: -20px; background: radial-gradient(circle at 0 0, transparent 19.500px, #265495 20px); }
.active::after { right: -20px; background: radial-gradient(circle at 100% 0, transparent 19.500px, #265495 20px); }
.plus { width: 20px; height: 20px; margin-left: 18px; }
.tabsearch { width: 56px; height: 56px; border-radius: 18px; background: #265495; margin-left: auto; margin-right: 12px; display: flex; align-items: center; justify-content: center; }

.toolbar { flex: none; height: 94px; padding: 0 0 0 30px; border-bottom: 2px solid #5277ac; background: linear-gradient(#265495, #265495) padding-box; box-shadow: 0 -20px 0 #1a355e; border-radius: 18px 18px 0 0; display: grid; grid-template-columns: 73px 67px 70px 2737px 70px 70px 41px 66px 89px auto; align-items: center; clip-path: inset(0); }
.reload { width: 37px; height: 37px; }
.omnibox { width: 2700px; height: 68px; border-radius: 34px; background: #24426f; display: flex; align-items: center; }
.chip { width: 202px; height: 48px; margin-left: 10px; padding-left: 16px; border-radius: 24px; background: #265495; display: flex; align-items: center; gap: 13px; font-size: 24px; font-weight: 500; letter-spacing: -.1px; color: #eda29b; }
.url { margin-left: 16px; flex: 1; color: #a9b5c8; letter-spacing: .1px; }
.url b { font-weight: 400; color: #fff; }
.url s { color: #eda29b; text-decoration-thickness: 2px; }
.star { width: 38px; height: 38px; margin-right: 29px; }
.bar { width: 3px; height: 32px; background: #1a355e; }

.appnav { flex: none; height: 96px; padding-left: 32px; background: #151515; color: #fff; letter-spacing: -.4px; display: grid; grid-template-columns: 205px 154px 182px 326px 1627px 460px 91px 149px auto; align-items: center; }
.appnav b { font-weight: 400; }
.lookup { width: 396px; height: 64px; background: #fff; border: 2px solid #d9d9d9; border-radius: 4px; display: flex; align-items: center; padding-left: 25px; gap: 9px; color: #bfbfbf; }

.tracehead { flex: none; height: 148px; border-bottom: 2px solid #e1e1e1; display: flex; align-items: center; }
.back { width: 111px; align-self: stretch; padding-left: 36px; background: #fafafa; border-right: 2px solid #ddd; display: flex; align-items: center; }
.collapse { width: 42px; height: 26px; margin-left: 35px; }
.names { width: 1634px; margin-left: 35px; display: flex; flex-direction: column; }
h1 { font-size: 46px; line-height: 50px; letter-spacing: -.72px; color: #222; }
small { font-size: 38px; line-height: 50px; letter-spacing: -.42px; color: #aaa; }
.find { display: flex; height: 64px; color: #bfbfbf; }
.input { width: 640px; border: 2px solid #d9d9d9; border-radius: 4px 0 0 4px; padding-left: 23px; line-height: 60px; letter-spacing: -.5px; }
.help { width: 78px; border: solid #d9d9d9; border-width: 2px 2px 2px 0; display: flex; align-items: center; justify-content: center; }
.btn { width: 98px; border: solid #e4e4e4; border-width: 2px 2px 2px 0; background: #fafafa; display: flex; align-items: center; justify-content: center; }
.btn:last-child { border-radius: 0 4px 4px 0; }
.cmd, .viewsel { height: 64px; border: 2px solid #d9d9d9; border-radius: 6px; display: flex; align-items: center; box-shadow: 0 4px 0 rgba(0, 0, 0, .02); color: #222; }
.cmd { width: 71px; margin-left: 16px; justify-content: center; padding-top: 2px; }
.viewsel { width: 257px; margin-left: 16px; padding-left: 16px; letter-spacing: -.5px; }
.viewsel em { width: 198px; }

.overview { flex: none; height: 50px; background: #eee; border-bottom: 2px solid #e2e2e2; padding-left: 17px; display: flex; align-items: center; font-size: 27px; color: #999; }
.overview span { height: 24px; display: flex; align-items: center; gap: 8px; border-right: 2px solid #ddd; margin-right: 16px; }
.overview b { color: #000; font-weight: 700; letter-spacing: .8px; }
.overview .ms { color: #aaa; font-weight: 500; margin-left: -8px; letter-spacing: 0; }
.overview .c1 { width: 601px; }
.overview .c2 { width: 256px; }
.overview .c3 { width: 156px; }
.overview .c4 { width: 121px; }
.overview .c5 { border: 0; }

.minimap { flex: none; height: 168px; background: #f8f8f8; padding: 0 16px; }
.miniticks { height: 32px; display: grid; grid-template-columns: 832px 832px 832px 1fr auto; font-size: 23px; line-height: 26px; letter-spacing: -.2px; color: #717171; }
.canvas { width: 3328px; height: 120px; }

.timeline { flex: none; border-bottom: 2px solid #bbb; }
.thead { height: 78px; display: flex; background: #ececec; border: solid #ccc; border-width: 2px 0; }
.thead .namecol { background: none; border: 0; padding-left: 16px; position: relative; }
.namecol { width: 1438px; flex: none; display: flex; align-items: center; }
h2 { font-size: 32px; width: 1188px; letter-spacing: -.16px; padding-top: 2px; }
.thead .namecol svg { fill: none; stroke: #777; stroke-width: 3px; margin-right: 24px; }
.grip { position: absolute; right: 9px; bottom: 6px; width: 11px; height: 18px; border: solid #c8c8c8; border-width: 0 2px; }
.scale, .track { flex: 1; position: relative; background: linear-gradient(#d8d8d8, #d8d8d8) 0 0 / 2px 100% no-repeat, linear-gradient(#d8d8d8, #d8d8d8) 480.500px 0 / 2px 100% no-repeat, linear-gradient(#d8d8d8, #d8d8d8) 961px 0 / 2px 100% no-repeat, linear-gradient(#d8d8d8, #d8d8d8) 1441.500px 0 / 2px 100% no-repeat; }
.scale { display: grid; grid-template-columns: 480.500px 480.500px 480.500px 1fr auto; align-items: center; padding: 1px 8px 0; letter-spacing: -.35px; }
.row { height: 58px; display: flex; }
.row .namecol { background: #f8f8f8; border-bottom: 1px solid #fff; padding-left: 6px; }
.guide { width: 2px; height: 57px; background: #ccc; margin-right: 46px; flex: none; }
.guide:nth-last-child(5) { margin-right: 9px; }
.caret { width: 31px; height: 22px; flex: none; }
.swatch { width: 8px; height: 41px; margin-right: 16px; }
.svc { margin-top: -1px; letter-spacing: .38px; }
.op { margin-left: 17px; font-size: 22px; letter-spacing: .3px; color: #888; margin-top: 3px; }
.spanbar { position: absolute; top: 18px; height: 21px; border-radius: 6px; }
.crit { position: absolute; top: 26px; height: 6px; background: #000; }
.dur { position: absolute; top: 16px; font-size: 24px; line-height: 28px; color: #aaa; padding-right: 11px; }

.glow { position: absolute; left: 280px; right: 240px; bottom: 0; height: 70px; background: linear-gradient(transparent, rgba(0, 0, 0, .13)); -webkit-mask-image: linear-gradient(90deg, transparent, #000 140px, #000 calc(100% - 140px), transparent); mask-image: linear-gradient(90deg, transparent, #000 140px, #000 calc(100% - 140px), transparent); }

.dock { flex: none; width: 2714px; height: 148px; margin: 2px 0 0 323px; padding: 19px 0 0 3px; background: #151617; border: 2px solid #3b3c3e; border-radius: 50px; display: flex; }
.app { width: 126px; height: 125px; display: flex; justify-content: center; align-items: flex-start; position: relative; flex: none; }
.app svg { width: 96px; height: 96px; }
.app svg.wide { width: 112px; height: 112px; margin-top: -8px; }
.app svg.disc { width: 104px; height: 104px; margin-top: -4px; }
.app svg.over { width: 104px; height: 104px; margin-right: -8px; }
.run::after { content: ""; position: absolute; left: 58px; top: 115px; width: 8px; height: 8px; border-radius: 4px; background: #949596; }
.calendar { width: 96px; height: 96px; margin: 0 15px; border-radius: 22px; background: linear-gradient(#fdfdfd, #efeeec); overflow: hidden; flex-direction: column; align-items: center; justify-content: flex-start; }
.mon { width: 96px; height: 30px; background: #e5605a; color: #fff; font-size: 19px; line-height: 33px; text-align: center; font-family: Roboto, sans-serif; font-weight: 500; }
.day { font-size: 59px; line-height: 60px; font-weight: 300; color: #2a2a2a; letter-spacing: -3px; padding-right: 2px; }
.sep { width: 2px; height: 108px; background: #48494b; margin: -1px 27px 0 31px; }
.trash { width: 126px; }
.trash svg { width: 88px; height: 110px; margin-top: -8px; }
</style>
